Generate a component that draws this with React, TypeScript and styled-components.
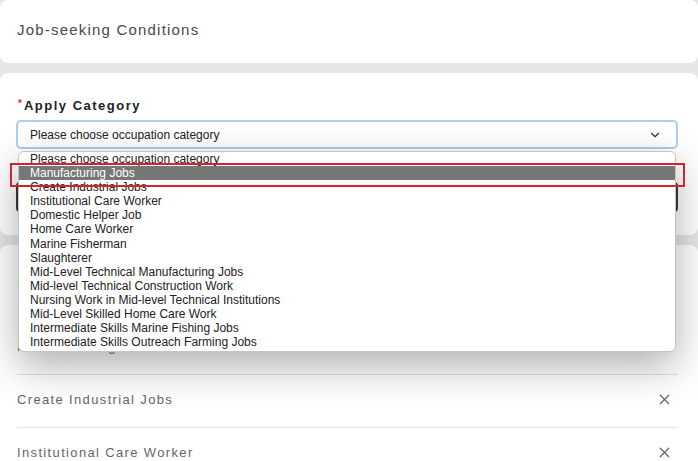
import styled, { createGlobalStyle } from "styled-components";
import { ChevronDown, X } from "lucide-react";

const categories = [
  "Please choose occupation category",
  "Manufacturing Jobs",
  "Create Industrial Jobs",
  "Institutional Care Worker",
  "Domestic Helper Job",
  "Home Care Worker",
  "Marine Fisherman",
  "Slaughterer",
  "Mid-Level Technical Manufacturing Jobs",
  "Mid-level Technical Construction Work",
  "Nursing Work in Mid-level Technical Institutions",
  "Mid-Level Skilled Home Care Work",
  "Intermediate Skills Marine Fishing Jobs",
  "Intermediate Skills Outreach Farming Jobs",
];

const selected = ["Manufacturing Jobs", "Create Industrial Jobs", "Institutional Care Worker"];

const GlobalStyle = createGlobalStyle`
  html, body {
    margin: 0;
    padding: 0;
    background: #e6e6e6;
    font-family: "Liberation Sans", Arial, sans-serif;
  }
`;

const Page = styled.div`
  display: flex;
  flex-direction: column;
  gap: 10px;
  height: 461px;
  overflow: hidden;
`;

const Card = styled.section<{ $raised?: boolean }>`
  flex-shrink: 0;
  background: #fff;
  border-radius: 8px;
  position: relative;
  z-index: ${(p) => (p.$raised ? 2 : 1)};
`;

const TitleCard = styled(Card)`
  height: 63px;
  box-sizing: border-box;
  display: flex;
  align-items: center;
  padding: 0 0 4px 17px;
`;

const Title = styled.h2`
  margin: 0;
  font-size: 15px;
  font-weight: normal;
  letter-spacing: 1.2px;
  color: #4a4a4a;
`;

const FormCard = styled(Card)`
  padding: 25px 20px 23px 16px;
`;

const Label = styled.div`
  display: flex;
  align-items: flex-start;
  height: 16px;
  line-height: 16px;
  margin-bottom: 6px;
  padding-left: 2px;
  font-size: 13px;
  font-weight: bold;
  letter-spacing: 1.5px;
  color: #222;
`;

const Required = styled.span`
  color: #e0323c;
  font-size: 10px;
  line-height: 12px;
  margin-right: 2px;
  letter-spacing: 0;
`;

const Field = styled.div`
  position: relative;
`;

const SelectBox = styled.div`
  height: 29px;
  box-sizing: border-box;
  border: 2px solid #afcdf2;
  border-radius: 5px;
  display: flex;
  align-items: center;
  justify-content: space-between;
  padding: 0 14px 0 12px;
  font-size: 12px;
  color: #222;
  background: #fff;
`;

const Popup = styled.div`
  position: absolute;
  top: 31px;
  left: 2px;
  right: 2px;
  height: 201px;
  box-sizing: border-box;
  background: #fff;
  border: 1px solid #c4c4c4;
  border-radius: 6px;
  box-shadow: 0 14px 40px rgba(0, 0, 0, 0.32);
  overflow: hidden;
  z-index: 5;
`;

const OptionList = styled.ul`
  list-style: none;
  margin: 0;
  padding: 0;
`;

const Option = styled.li<{ $active?: boolean }>`
  height: 14.1px;
  line-height: 14.1px;
  padding-left: 11px;
  font-size: 12px;
  white-space: nowrap;
  color: ${(p) => (p.$active ? "#fff" : "#222")};
  background: ${(p) => (p.$active ? "#777" : "transparent")};
`;

const Annotation = styled.div`
  position: absolute;
  left: -6px;
  top: 43px;
  width: 675px;
  height: 24px;
  box-sizing: border-box;
  border: 2px solid #d3232f;
  z-index: 6;
  pointer-events: none;
`;

const AddButton = styled.button`
  display: block;
  width: 100%;
  height: 30px;
  margin-top: 33px;
  border: none;
  border-radius: 4px;
  background: #3a3a3a;
  color: #fff;
  font-family: inherit;
  font-size: 13px;
`;

const ListCard = styled(Card)`
  flex-grow: 1;
  padding: 0 20px 0 17px;
`;

const ListHeading = styled.div`
  height: 77px;
  display: flex;
  align-items: center;
  font-size: 13px;
  letter-spacing: 1.3px;
  color: #666;
`;

const Row = styled.div`
  height: 53px;
  box-sizing: border-box;
  padding: 0 5px 3px 0;
  border-bottom: 1px solid #e2e2e2;
  display: flex;
  align-items: center;
  justify-content: space-between;
`;

const RowText = styled.span`
  font-size: 13px;
  letter-spacing: 1.35px;
  color: #666;
`;

export default function App() {
  return (
    <>
      <GlobalStyle />
      <Page>
        <TitleCard>
          <Title>Job-seeking Conditions</Title>
        </TitleCard>

        <FormCard $raised>
          <Label>
            <Required>*</Required>
            Apply Category
          </Label>
          <Field>
            <SelectBox>
              <span>Please choose occupation category</span>
              <ChevronDown size={14} strokeWidth={2} color="#333" />
            </SelectBox>
            <Popup>
              <OptionList>
                {categories.map((c, i) => (
                  <Option key={c} $active={i === 1}>
                    {c}
                  </Option>
                ))}
              </OptionList>
            </Popup>
            <Annotation />
          </Field>
          <AddButton>Add</AddButton>
        </FormCard>

        <ListCard>
          <ListHeading>Selected Categories</ListHeading>
          {selected.map((s) => (
            <Row key={s}>
              <RowText>{s}</RowText>
              <X size={17} strokeWidth={1.8} color="#666" />
            </Row>
          ))}
        </ListCard>
      </Page>
    </>
  );
}
